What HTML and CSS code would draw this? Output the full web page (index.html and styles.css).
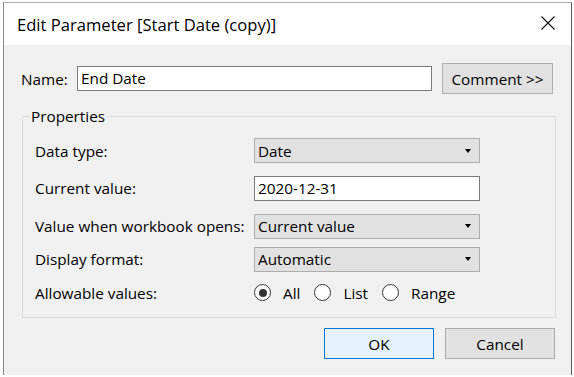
FILE: index.html
```html
<!DOCTYPE html>
<html>
<head>
<meta charset="utf-8">
<link rel="stylesheet" href="styles.css">
</head>
<body>
<div class="window">
  <div class="titlebar">
    <span class="title">Edit Parameter [Start Date (copy)]</span>
    <svg class="close" width="14" height="14" viewBox="0 0 14 14"><path d="M0.5 0.5 L13.5 13.5 M13.5 0.5 L0.5 13.5" stroke="#111" stroke-width="1.1" fill="none"/></svg>
  </div>
  <div class="content">
    <div class="name-row">
      <label class="name-label">Name:</label>
      <div class="textbox name-box">End Date</div>
      <div class="button comment">Comment &gt;&gt;</div>
    </div>
    <fieldset class="group">
      <legend>Properties</legend>
      <div class="grid">
        <div class="label r1">Data type:</div>
        <div class="dropdown r1"><span>Date</span><i class="arrow"></i></div>
        <div class="label r2">Current value:</div>
        <div class="textbox value-box r2">2020-12-31</div>
        <div class="label r3">Value when workbook opens:</div>
        <div class="dropdown r3"><span>Current value</span><i class="arrow"></i></div>
        <div class="label r4">Display format:</div>
        <div class="dropdown r4"><span>Automatic</span><i class="arrow"></i></div>
        <div class="label r5">Allowable values:</div>
        <div class="radios r5">
          <span class="radio checked"></span><span class="rlabel">All</span>
          <span class="radio"></span><span class="rlabel">List</span>
          <span class="radio"></span><span class="rlabel">Range</span>
        </div>
      </div>
    </fieldset>
    <div class="buttons">
      <div class="button ok">OK</div>
      <div class="button cancel">Cancel</div>
    </div>
  </div>
</div>
</body>
</html>
```
FILE: styles.css
```css
html, body {
  margin: 0;
  padding: 0;
  background: #ffffff;
  overflow: hidden;
  width: 574px;
  height: 377px;
}
body {
  font-family: "Open Sans", "Noto Sans", sans-serif;
  font-size: 15.3px;
  color: #000;
}
.window {
  margin: 2px 0 0 3px;
  width: 567px;
  height: 372px;
  border-left: 1px solid #8a8a8a;
  border-top: 1px solid #a9a9a9;
  border-right: 1px solid #5a5a5a;
  background: #f0f0f0;
}
.titlebar {
  height: 42px;
  background: #ffffff;
  display: flex;
  align-items: center;
  justify-content: space-between;
  padding: 0 16px 0 13px;
}
.title {
  font-size: 16.6px;
  line-height: 20px;
  margin-top: 2px;
}
.close {
  display: block;
  margin-top: -2px;
}
.content {
  padding: 18px 16px 0 17px;
}
.name-row {
  display: flex;
  align-items: center;
  height: 31px;
}
.name-label {
  width: 56px;
}
.textbox {
  background: #fff;
  border: 1px solid #7a7a7a;
  box-sizing: border-box;
  padding: 0 3px;
  line-height: 22px;
  height: 25px;
}
.name-box {
  width: 355px;
  margin-right: 10px;
}
.button {
  box-sizing: border-box;
  background: #e1e1e1;
  border: 1px solid #adadad;
  display: flex;
  align-items: center;
  justify-content: center;
}
.comment {
  width: 111px;
  height: 31px;
}
.group {
  margin: 12px 0 0 1px;
  width: 534px;
  box-sizing: border-box;
  border: 1px solid #dcdcdc;
  padding: 0 8px 5px 12px;
  min-width: 0;
}
.group legend {
  padding: 0 2px;
  margin-left: -6px;
  line-height: 20px;
}
.grid {
  display: grid;
  grid-template-columns: 219px 226px;
  grid-template-rows: 37px 38px 38px 28px 39px;
  align-items: center;
  margin-top: 6px;
}
.label {
  line-height: 20px;
}
.dropdown {
  box-sizing: border-box;
  height: 25px;
  background: #e1e1e1;
  border: 1px solid #adadad;
  display: flex;
  align-items: center;
  justify-content: space-between;
  padding: 0 8px 0 3px;
}
.arrow {
  display: block;
  width: 0;
  height: 0;
  border-left: 3.5px solid transparent;
  border-right: 3.5px solid transparent;
  border-top: 4px solid #000;
}
.value-box {
  height: 25px;
}
.radios {
  display: flex;
  align-items: center;
}
.radio {
  box-sizing: border-box;
  width: 17px;
  height: 17px;
  border-radius: 50%;
  border: 1px solid #333;
  background: #fff;
  display: flex;
  align-items: center;
  justify-content: center;
}
.radio.checked::after {
  content: "";
  width: 8px;
  height: 8px;
  border-radius: 50%;
  background: #333;
}
.rlabel {
  margin-left: 12px;
  margin-right: 14px;
}
.buttons {
  display: flex;
  justify-content: flex-end;
  gap: 11px;
  margin-top: 10px;
}
.ok, .cancel {
  width: 110px;
  height: 31px;
}
.ok {
  background: #e5f1fb;
  border-color: #0078d7;
}
```
